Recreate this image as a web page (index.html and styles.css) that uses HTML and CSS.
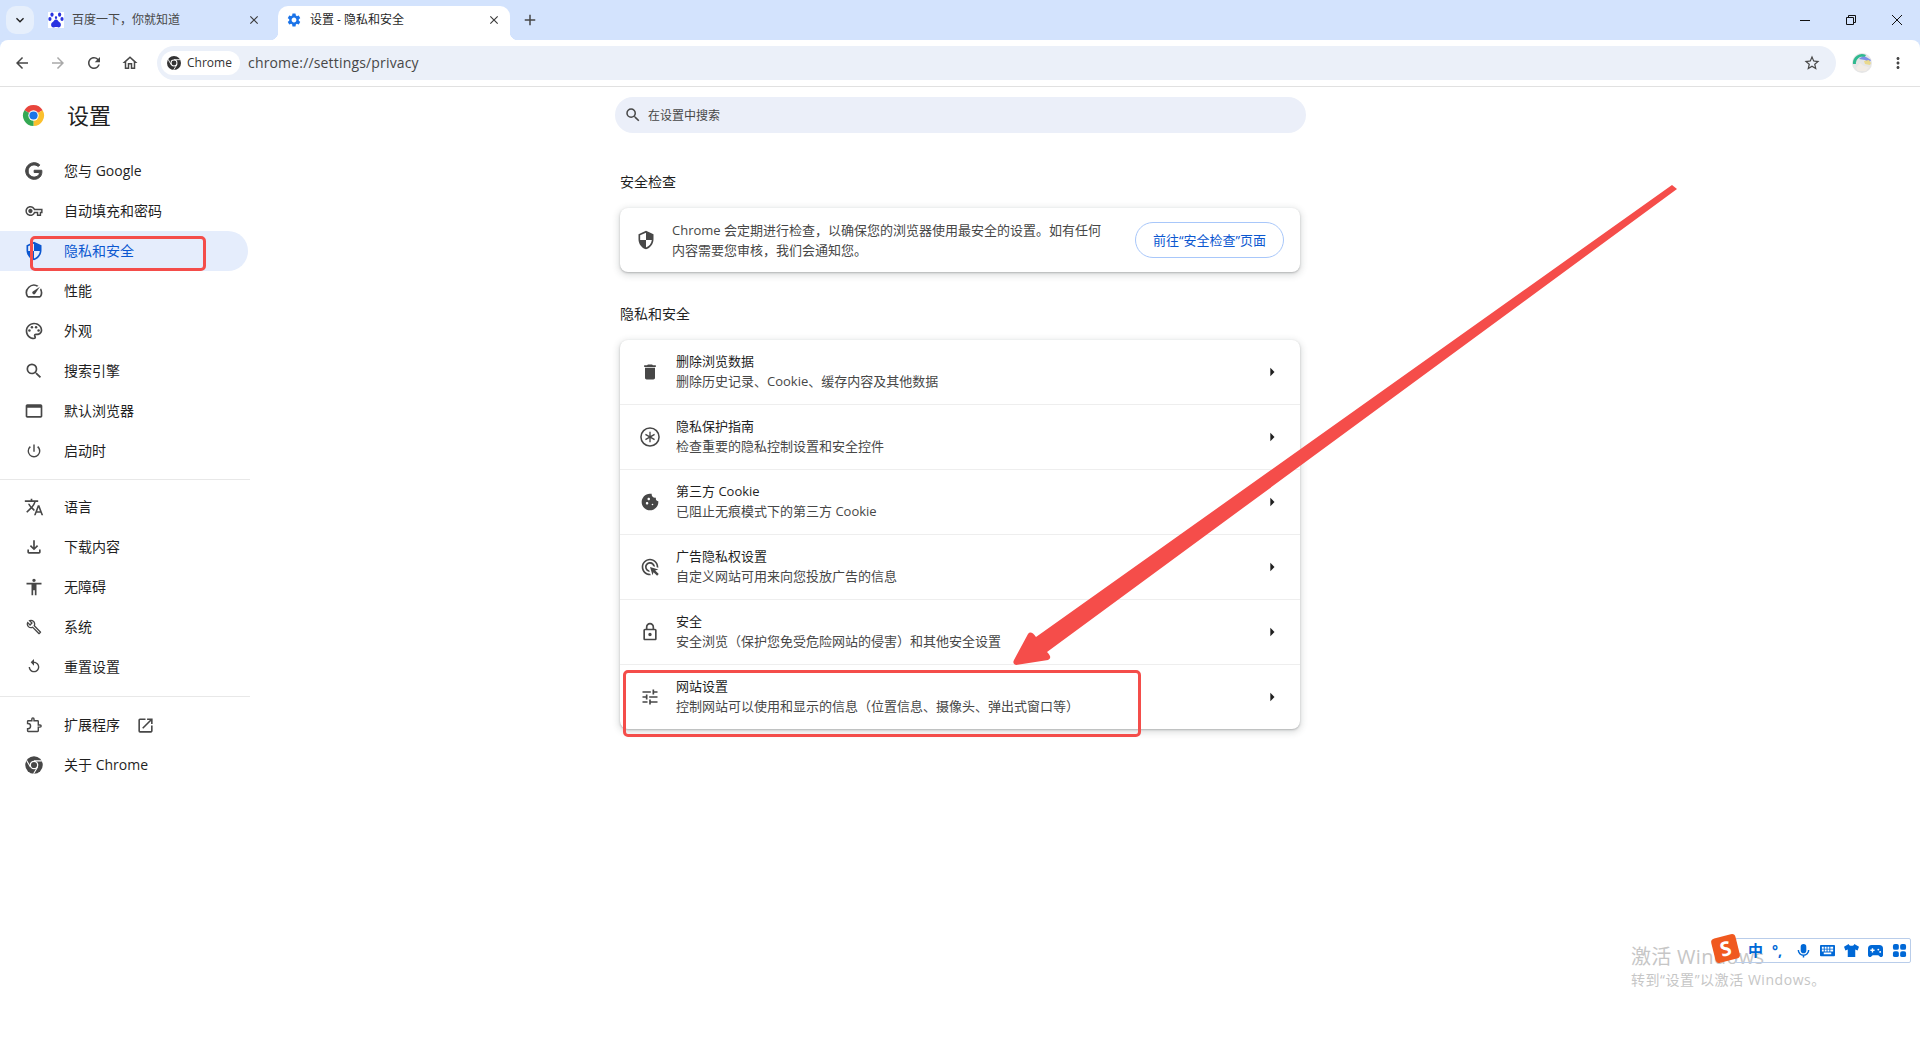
FILE: index.html
```html
<!DOCTYPE html>
<html lang="zh-CN">
<head>
    <meta charset="UTF-8">
    <title>设置 - 隐私和安全</title>
    <link rel="stylesheet" href="styles.css">
</head>
<body>
    <svg class="defs" width="0" height="0">
        <defs>
            <symbol id="chrome-mono" viewBox="0 0 24 24">
                <circle cx="12" cy="12" r="10.5" fill="currentColor"/>
                <path d="M12 7h9.5M7.7 14.5L3 6.3M16.3 14.5L11.5 22.5" stroke="#fff" stroke-width="1.3" fill="none"/>
                <circle cx="12" cy="12" r="5.2" fill="#fff"/>
                <circle cx="12" cy="12" r="3.7" fill="currentColor"/>
            </symbol>
            <symbol id="shield" viewBox="0 0 24 24">
                <path d="M12 1L3 5v6c0 5.55 3.84 10.74 9 12 5.16-1.26 9-6.45 9-12V5l-9-4zm0 10.99h7c-.53 4.12-3.28 7.79-7 8.94V12H5V6.3l7-3.11v8.8z"/>
            </symbol>
            <symbol id="arrow-right" viewBox="0 0 24 24">
                <path d="M10 17l5-5-5-5v10z"/>
            </symbol>
        </defs>
    </svg>

    <header class="tabstrip">
        <button class="tab-search">
            <svg viewBox="0 0 24 24" class="ico-16"><path d="M7.41 8.59L12 13.17l4.59-4.58L18 10l-6 6-6-6z"/></svg>
        </button>
        <div class="tab">
            <svg viewBox="0 0 16 16" class="favicon">
                <rect width="16" height="16" fill="#fff"/>
                <g fill="#2932e1">
                    <ellipse cx="4" cy="2.6" rx="1.6" ry="2.2"/>
                    <ellipse cx="11.6" cy="2.6" rx="1.6" ry="2.2"/>
                    <ellipse cx="1.9" cy="7" rx="1.6" ry="2.1"/>
                    <ellipse cx="14" cy="7" rx="1.6" ry="2.1"/>
                    <ellipse cx="8" cy="5.4" rx="1.1" ry="1.5"/>
                    <path d="M8 7.4c-1.9 0-2.3 2-3.9 3.2C2.5 11.800 2.800 15.500 5.400 15.500c1.200 0 1.700-.4 2.600-.4s1.500.4 2.700.4c2.500 0 2.800-3.700 1.200-4.900C10.300 9.400 9.900 7.400 8 7.400z"/>
                </g>
            </svg>
            <span class="tab-title">百度一下，你就知道</span>
            <svg viewBox="0 0 24 24" class="tab-close"><path d="M19 6.41L17.59 5 12 10.59 6.41 5 5 6.41 10.59 12 5 17.59 6.41 19 12 13.41 17.59 19 19 17.59 13.41 12z"/></svg>
        </div>
        <div class="tab tab-active">
            <svg viewBox="0 0 24 24" class="favicon gear"><path d="M19.14 12.94c.04-.3.06-.61.06-.94 0-.32-.02-.64-.07-.94l2.03-1.58a.49.49 0 0 0 .12-.61l-1.92-3.32a.488.488 0 0 0-.59-.22l-2.39.96c-.5-.38-1.03-.7-1.62-.94l-.36-2.54a.484.484 0 0 0-.48-.41h-3.84c-.24 0-.43.17-.47.41l-.36 2.54c-.59.24-1.13.57-1.62.94l-2.39-.96c-.22-.08-.47 0-.59.22L2.74 8.87c-.12.21-.08.47.12.61l2.03 1.58c-.05.3-.09.63-.09.94s.02.64.07.94l-2.03 1.58a.49.49 0 0 0-.12.61l1.92 3.32c.12.22.37.29.59.22l2.39-.96c.5.38 1.03.7 1.62.94l.36 2.54c.05.24.24.41.48.41h3.84c.24 0 .44-.17.47-.41l.36-2.54c.59-.24 1.13-.56 1.62-.94l2.39.96c.22.08.47 0 .59-.22l1.92-3.32c.12-.22.07-.47-.12-.61l-2.01-1.58zM12 15.600c-1.98 0-3.600-1.620-3.600-3.600s1.620-3.600 3.600-3.600 3.600 1.620 3.600 3.600-1.620 3.600-3.600 3.600z"/></svg>
            <span class="tab-title">设置 - 隐私和安全</span>
            <svg viewBox="0 0 24 24" class="tab-close"><path d="M19 6.41L17.59 5 12 10.59 6.41 5 5 6.41 10.59 12 5 17.59 6.41 19 12 13.41 17.59 19 19 17.59 13.41 12z"/></svg>
        </div>
        <button class="new-tab">
            <svg viewBox="0 0 24 24" class="ico-18"><path d="M19 13h-6v6h-2v-6H5v-2h6V5h2v6h6v2z"/></svg>
        </button>
        <div class="window-controls">
            <span class="win-btn"><svg width="12" height="12" viewBox="0 0 12 12"><path d="M1 6.500h10" stroke="#111" fill="none"/></svg></span>
            <span class="win-btn"><svg width="12" height="12" viewBox="0 0 12 12"><path d="M1.500 3.500h7v7h-7zM3.500 3.500v-2h7v7h-2" stroke="#111" fill="none"/></svg></span>
            <span class="win-btn"><svg width="12" height="12" viewBox="0 0 12 12"><path d="M1 1l10 10M11 1L1 11" stroke="#111" fill="none"/></svg></span>
        </div>
    </header>

    <div class="toolbar">
        <span class="tool-btn"><svg viewBox="0 0 24 24" class="ico-18"><path d="M20 11H7.830l5.590-5.590L12 4l-8 8 8 8 1.410-1.410L7.830 13H20v-2z"/></svg></span>
        <span class="tool-btn disabled"><svg viewBox="0 0 24 24" class="ico-18"><path d="M4 11h12.170l-5.590-5.590L12 4l8 8-8 8-1.410-1.410L16.170 13H4v-2z"/></svg></span>
        <span class="tool-btn"><svg viewBox="0 0 24 24" class="ico-18"><path d="M17.650 6.350A7.958 7.958 0 0 0 12 4c-4.420 0-7.990 3.580-7.990 8s3.570 8 7.990 8c3.730 0 6.840-2.550 7.730-6h-2.080A5.990 5.990 0 0 1 12 18c-3.310 0-6-2.690-6-6s2.690-6 6-6c1.660 0 3.140.69 4.220 1.780L13 11h7V4l-2.350 2.350z"/></svg></span>
        <span class="tool-btn"><svg viewBox="0 0 24 24" class="ico-18"><path d="M12 5.690l5 4.500V18h-2v-6H9v6H7v-7.810l5-4.500M12 3L2 12h3v8h6v-6h2v6h6v-8h3L12 3z"/></svg></span>
        <div class="omnibox">
            <span class="chip">
                <svg class="chip-icon"><use href="#chrome-mono"/></svg>
                Chrome
            </span>
            <span class="url">chrome://settings/privacy</span>
            <svg viewBox="0 0 24 24" class="ico-18 star"><path d="M22 9.240l-7.190-.62L12 2 9.190 8.630 2 9.240l5.460 4.730L5.820 21 12 17.270 18.180 21l-1.630-7.030L22 9.240zM12 15.400l-3.760 2.270 1-4.280-3.320-2.880 4.380-.38L12 6.100l1.710 4.040 4.380.38-3.320 2.880 1 4.280L12 15.400z"/></svg>
        </div>
        <svg class="avatar" viewBox="0 0 20 20">
            <circle cx="10" cy="10" r="10" fill="#e6e6e6"/>
            <path d="M1 11A9 9 0 0 1 14 2l-1.500 2.500A6 6 0 0 0 4 11z" fill="#2fb98f"/>
            <path d="M7 6a6 6 0 0 1 8-1.500L19 7l-2 3-4-3z" fill="#7f8fe8"/>
            <path d="M12 8l5-1 2 3-1 2-5-1z" fill="#e9d98e"/>
            <path d="M4 15l4-5 4 3 5 1-3 4H6z" fill="#f1ece6"/>
        </svg>
        <svg viewBox="0 0 24 24" class="ico-18 menu-dots"><path d="M12 8c1.100 0 2-.9 2-2s-.9-2-2-2-2 .9-2 2 .9 2 2 2zm0 2c-1.100 0-2 .9-2 2s.9 2 2 2 2-.9 2-2-.9-2-2-2zm0 6c-1.100 0-2 .9-2 2s.9 2 2 2 2-.9 2-2-.9-2-2-2z"/></svg>
    </div>

    <div class="page">
        <aside class="sidebar">
            <div class="brand">
                <svg viewBox="0 0 24 24" class="logo">
                    <path d="M12 12L2.470 6.500A11 11 0 0 1 21.530 6.500z" fill="#e8453c"/>
                    <path d="M12 12L21.530 6.500A11 11 0 0 1 12 23z" fill="#fbc02d"/>
                    <path d="M12 12L12 23A11 11 0 0 1 2.470 6.500z" fill="#34a853"/>
                    <circle cx="12" cy="12" r="5.400" fill="#fff"/>
                    <circle cx="12" cy="12" r="4.300" fill="#1a73e8"/>
                </svg>
                <span class="brand-name">设置</span>
            </div>
            <nav class="nav">
                <a class="nav-item"><svg viewBox="0 0 24 24" class="heavy"><path d="M21.350 11.100h-9.170v2.730h6.510c-.33 3.810-3.500 5.440-6.500 5.440C8.360 19.270 5 16.250 5 12c0-4.100 3.200-7.270 7.200-7.270 3.090 0 4.900 1.970 4.900 1.970L19 4.720S16.560 2 12.100 2C6.420 2 2 6.800 2 12c0 5.050 4.130 10 10.220 10 5.350 0 9.250-3.670 9.250-9.090 0-1.150-.15-1.810-.15-1.810z"/></svg>您与 Google</a>
                <a class="nav-item"><svg viewBox="-2 -2 28 28"><path d="M22 19h-6v-4h-2.680c-1.140 2.420-3.600 4-6.320 4-3.860 0-7-3.140-7-7s3.140-7 7-7c2.720 0 5.170 1.580 6.320 4H24v6h-2v4zm-4-2h2v-4h2v-2H11.940l-.23-.67C11.010 8.340 9.110 7 7 7c-2.760 0-5 2.240-5 5s2.240 5 5 5c2.110 0 4.010-1.340 4.710-3.330l.23-.67H18v4zM7 15c-1.650 0-3-1.350-3-3s1.350-3 3-3 3 1.350 3 3-1.350 3-3 3z"/></svg>自动填充和密码</a>
                <a class="nav-item active"><svg><use href="#shield"/></svg>隐私和安全</a>
                <a class="nav-item"><svg viewBox="0 0 24 24"><path d="M20.380 8.570l-1.230 1.850a8 8 0 0 1-.22 7.580H5.070A8 8 0 0 1 15.580 6.850l1.850-1.230A10 10 0 0 0 3.350 19a2 2 0 0 0 1.720 1h13.850a2 2 0 0 0 1.740-1 10 10 0 0 0-.27-10.440zm-9.790 6.840a2 2 0 0 0 2.830 0l5.660-8.490-8.490 5.660a2 2 0 0 0 0 2.830z"/></svg>性能</a>
                <a class="nav-item"><svg viewBox="0 0 24 24"><path d="M12 22C6.490 22 2 17.510 2 12S6.490 2 12 2s10 4.040 10 9c0 3.310-2.690 6-6 6h-1.770c-.28 0-.5.22-.5.5 0 .12.05.23.13.33.41.47.64 1.060.64 1.670A2.500 2.500 0 0 1 12 22zm0-18c-4.410 0-8 3.590-8 8s3.590 8 8 8c.28 0 .5-.22.5-.5a.54.54 0 0 0-.14-.35c-.41-.46-.63-1.050-.63-1.650a2.500 2.500 0 0 1 2.500-2.500H16c2.210 0 4-1.790 4-4 0-3.860-3.590-7-8-7z"/><circle cx="6.500" cy="11.500" r="1.500"/><circle cx="9.500" cy="7.500" r="1.500"/><circle cx="14.500" cy="7.500" r="1.500"/><circle cx="17.500" cy="11.500" r="1.500"/></svg>外观</a>
                <a class="nav-item"><svg viewBox="0 0 24 24"><path d="M15.500 14h-.79l-.28-.27A6.471 6.471 0 0 0 16 9.500 6.500 6.500 0 1 0 9.500 16c1.610 0 3.090-.59 4.230-1.570l.27.28v.79l5 4.990L20.490 19l-4.990-5zm-6 0C7.010 14 5 11.990 5 9.500S7.010 5 9.500 5 14 7.010 14 9.500 11.990 14 9.500 14z"/></svg>搜索引擎</a>
                <a class="nav-item"><svg viewBox="0 0 24 24"><path d="M20 4H4c-1.100 0-2 .9-2 2v12c0 1.100.9 2 2 2h16c1.100 0 2-.9 2-2V6c0-1.100-.9-2-2-2zm0 14H4V8h16v10z"/></svg>默认浏览器</a>
                <a class="nav-item"><svg viewBox="-2 -2 28 28"><path d="M13 3h-2v10h2V3zm4.830 2.170l-1.420 1.420A6.920 6.920 0 0 1 19 12c0 3.870-3.130 7-7 7A6.995 6.995 0 0 1 7.580 6.580L6.170 5.170A8.932 8.932 0 0 0 3 12a9 9 0 0 0 18 0c0-2.740-1.230-5.180-3.170-6.830z"/></svg>启动时</a>
            </nav>
            <div class="nav-sep sep-first"></div>
            <nav class="nav">
                <a class="nav-item"><svg viewBox="0 0 24 24"><path d="M12.870 15.070l-2.540-2.510.03-.03A17.520 17.520 0 0 0 14.070 6H17V4h-7V2H8v2H1v1.990h11.170C11.500 7.920 10.440 9.750 9 11.350 8.070 10.320 7.300 9.190 6.690 8h-2c.73 1.630 1.730 3.170 2.980 4.560l-5.090 5.020L4 19l5-5 3.110 3.110.76-2.040zM18.500 10h-2L12 22h2l1.120-3h4.750L21 22h2l-4.500-12zm-2.620 7l1.620-4.330L19.120 17h-3.240z"/></svg>语言</a>
                <a class="nav-item"><svg viewBox="0 0 24 24"><path d="M18 15v3H6v-3H4v3c0 1.100.9 2 2 2h12c1.100 0 2-.9 2-2v-3h-2zm-1-4l-1.410-1.410L13 12.170V4h-2v8.170L8.410 9.590 7 11l5 5 5-5z"/></svg>下载内容</a>
                <a class="nav-item"><svg viewBox="0 0 24 24"><path d="M12 2c1.100 0 2 .9 2 2s-.9 2-2 2-2-.9-2-2 .9-2 2-2zm9 7h-6v13h-2v-6h-2v6H9V9H3V7h18v2z"/></svg>无障碍</a>
                <a class="nav-item"><svg viewBox="-3 -3 30 30"><path d="M22.610 18.990l-9.080-9.080c.93-2.340.45-5.100-1.440-7C9.790.61 6.210.4 3.660 2.260L7.500 6.110 6.080 7.520 2.250 3.690C.39 6.230.6 9.820 2.900 12.110c1.860 1.860 4.570 2.350 6.890 1.480l9.110 9.110c.39.39 1.020.39 1.410 0l2.300-2.300c.4-.38.4-1.010 0-1.410zm-3 1.600l-9.460-9.460c-.61.45-1.290.72-2 .82-1.360.2-2.790-.21-3.830-1.250C3.370 9.760 2.930 8.500 3 7.260l3.090 3.090 4.240-4.240-3.090-3.090c1.240-.07 2.490.37 3.440 1.310 1.080 1.080 1.490 2.570 1.240 3.960-.12.71-.42 1.370-.88 1.960l9.450 9.450-.88.89z"/></svg>系统</a>
                <a class="nav-item"><svg viewBox="-3 -2 30 30"><path d="M12 5V1L7 6l5 5V7c3.310 0 6 2.690 6 6s-2.690 6-6 6-6-2.690-6-6H4c0 4.420 3.580 8 8 8s8-3.580 8-8-3.580-8-8-8z"/></svg>重置设置</a>
            </nav>
            <div class="nav-sep sep-second"></div>
            <nav class="nav">
                <a class="nav-item"><svg viewBox="-2 -2 28 28"><path class="outline" d="M20.500 12H18V7c0-.6-.4-1-1-1h-5V3.500a1.500 1.500 0 0 0-3 0V6H4c-.6 0-1 .4-1 1v2.800h.5a3.700 3.700 0 0 1 0 7.400H3V20c0 .6.4 1 1 1h13c.6 0 1-.4 1-1v-5h2.500a1.500 1.500 0 0 0 0-3z"/></svg>扩展程序<svg class="external" viewBox="0 0 24 24"><path d="M19 19H5V5h7V3H5a2 2 0 0 0-2 2v14a2 2 0 0 0 2 2h14c1.100 0 2-.9 2-2v-7h-2v7zM14 3v2h3.590l-9.830 9.830 1.410 1.410L19 6.410V10h2V3h-7z"/></svg></a>
                <a class="nav-item"><svg class="mono"><use href="#chrome-mono"/></svg>关于 Chrome</a>
            </nav>
        </aside>

        <main class="content">
            <div class="search">
                <svg viewBox="0 0 24 24" class="ico-18"><path d="M15.500 14h-.79l-.28-.27A6.471 6.471 0 0 0 16 9.500 6.500 6.500 0 1 0 9.500 16c1.610 0 3.090-.59 4.230-1.570l.27.28v.79l5 4.990L20.490 19l-4.990-5zm-6 0C7.010 14 5 11.990 5 9.500S7.010 5 9.500 5 14 7.010 14 9.500 11.990 14 9.500 14z"/></svg>
                <span class="search-text">在设置中搜索</span>
            </div>

            <section class="section">
                <h2 class="section-title first">安全检查</h2>
                <div class="card check-card">
                    <svg class="row-icon"><use href="#shield"/></svg>
                    <p class="check-text">Chrome 会定期进行检查，以确保您的浏览器使用最安全的设置。如有任何<br>内容需要您审核，我们会通知您。</p>
                    <span class="check-btn">前往“安全检查”页面</span>
                </div>

                <h2 class="section-title">隐私和安全</h2>
                <div class="card">
                    <div class="row">
                        <svg class="row-icon" viewBox="0 0 24 24"><path d="M6 19c0 1.100.9 2 2 2h8c1.100 0 2-.9 2-2V7H6v12zM19 4h-3.500l-1-1h-5l-1 1H5v2h14V4z"/></svg>
                        <div class="row-text"><div class="row-title">删除浏览数据</div><div class="row-sub">删除历史记录、Cookie、缓存内容及其他数据</div></div>
                        <svg class="chevron"><use href="#arrow-right"/></svg>
                    </div>
                    <div class="row">
                        <svg class="row-icon" viewBox="1.500 1.500 21 21"><circle cx="12" cy="12" r="9.500" class="ring"/><path class="rays" d="M12 6.500v11M7.200 9.200l9.600 5.600M16.800 9.200l-9.600 5.600"/></svg>
                        <div class="row-text"><div class="row-title">隐私保护指南</div><div class="row-sub">检查重要的隐私控制设置和安全控件</div></div>
                        <svg class="chevron"><use href="#arrow-right"/></svg>
                    </div>
                    <div class="row">
                        <svg class="row-icon" viewBox="0 0 24 24"><path d="M21.950 10.990c-1.790-.03-3.700-1.950-2.680-4.220-2.970 1-5.780-1.590-5.190-4.560C7.110.74 2 6.410 2 12c0 5.520 4.480 10 10 10 5.890 0 10.540-5.080 9.950-11.010zM8.500 15c-.83 0-1.500-.67-1.500-1.500S7.670 12 8.500 12s1.500.67 1.500 1.500S9.330 15 8.500 15zm2-5C9.670 10 9 9.330 9 8.500S9.670 7 10.500 7s1.500.67 1.500 1.500-.67 1.500-1.500 1.500zm4.500 6c-.55 0-1-.45-1-1s.45-1 1-1 1 .45 1 1-.45 1-1 1z"/></svg>
                        <div class="row-text"><div class="row-title">第三方 Cookie</div><div class="row-sub">已阻止无痕模式下的第三方 Cookie</div></div>
                        <svg class="chevron"><use href="#arrow-right"/></svg>
                    </div>
                    <div class="row">
                        <svg class="row-icon" viewBox="0 0 24 24"><path d="M11.710 17.990A5.993 5.993 0 0 1 6 12c0-3.310 2.690-6 6-6 3.220 0 5.840 2.530 5.990 5.710l-2.100-.63A3.999 3.999 0 0 0 12 8c-2.210 0-4 1.790-4 4 0 1.870 1.280 3.440 3.010 3.880l.7 2.110zM22 12c0 .3-.01.6-.04.9l-1.970-.59c.01-.1.01-.21.01-.31 0-4.420-3.580-8-8-8s-8 3.580-8 8 3.580 8 8 8c.1 0 .21 0 .31-.01l.59 1.970c-.3.03-.6.04-.9.04-5.520 0-10-4.480-10-10S6.480 2 12 2s10 4.480 10 10zm-3.770 4.260L22 15l-10-3 3 10 1.260-3.770 4.270 4.270 1.980-1.980-4.280-4.260z"/></svg>
                        <div class="row-text"><div class="row-title">广告隐私权设置</div><div class="row-sub">自定义网站可用来向您投放广告的信息</div></div>
                        <svg class="chevron"><use href="#arrow-right"/></svg>
                    </div>
                    <div class="row">
                        <svg class="row-icon" viewBox="0 0 24 24"><path d="M18 8h-1V6c0-2.760-2.240-5-5-5S7 3.240 7 6v2H6c-1.100 0-2 .9-2 2v10c0 1.100.9 2 2 2h12c1.100 0 2-.9 2-2V10c0-1.100-.9-2-2-2zM9 6c0-1.660 1.340-3 3-3s3 1.340 3 3v2H9V6zm9 14H6V10h12v10zm-6-3c1.100 0 2-.9 2-2s-.9-2-2-2-2 .9-2 2 .9 2 2 2z"/></svg>
                        <div class="row-text"><div class="row-title">安全</div><div class="row-sub">安全浏览（保护您免受危险网站的侵害）和其他安全设置</div></div>
                        <svg class="chevron"><use href="#arrow-right"/></svg>
                    </div>
                    <div class="row">
                        <svg class="row-icon" viewBox="0 0 24 24"><path d="M3 17v2h6v-2H3zM3 5v2h10V5H3zm10 16v-2h8v-2h-8v-2h-2v6h2zM7 9v2H3v2h4v2h2V9H7zm14 4v-2H11v2h10zm-6-4h2V7h4V5h-4V3h-2v6z"/></svg>
                        <div class="row-text"><div class="row-title">网站设置</div><div class="row-sub">控制网站可以使用和显示的信息（位置信息、摄像头、弹出式窗口等）</div></div>
                        <svg class="chevron"><use href="#arrow-right"/></svg>
                    </div>
                </div>
            </section>
        </main>
    </div>

    <!-- annotations drawn on top of the screenshot -->
    <div class="mark mark-nav"></div>
    <div class="mark mark-row"></div>
    <svg class="arrow" width="1920" height="1040" viewBox="0 0 1920 1040">
        <path d="M1672 185L1677 189L1047 652Q1053 658 1048 660L1016 665Q1012 664 1014 660L1028 634Q1031 630 1036 637Z" fill="#f54d4a"/>
    </svg>

    <div class="watermark">
        <div class="wm-title">激活 Windows</div>
        <div class="wm-sub">转到“设置”以激活 Windows。</div>
    </div>

    <div class="ime">
        <span class="ime-logo"><span>S</span></span>
        <span class="ime-cn">中</span>
        <span class="ime-dot">°,</span>
        <svg viewBox="0 0 16 16"><rect x="5" y="1" width="6" height="10" rx="3"/><path d="M2.500 7.500a5.500 5.500 0 0 0 11 0M8 13v2.500" fill="none" stroke="#0068d6" stroke-width="1.600"/></svg>
        <svg viewBox="0 0 16 16"><path fill-rule="evenodd" d="M1 2h14a1 1 0 0 1 1 1v10a1 1 0 0 1-1 1H1a1 1 0 0 1-1-1V3a1 1 0 0 1 1-1zm1 2v2h2V4zm3 0v2h2V4zm3 0v2h2V4zm3 0v2h3V4zM2 7v2h2V7zm3 0v2h2V7zm3 0v2h2V7zm3 0v2h3V7zM4 10v2h8v-2z"/></svg>
        <svg viewBox="0 0 16 16"><path d="M5 1L0 4l1.500 4L4 7v8h8V7l2.500 1L16 4l-5-3c-.5 1.500-1.500 2-3 2s-2.500-.5-3-2z"/></svg>
        <svg viewBox="0 0 16 16"><path fill-rule="evenodd" d="M4 2h8a4 4 0 0 1 4 4v7a2 2 0 0 1-3.500 1.300L11 13H5l-1.500 1.300A2 2 0 0 1 0 13V6a4 4 0 0 1 4-4zm0 3.500V7H2.500v1.500H4V10h1.500V8.500H7V7H5.500V5.500zM11 6a1 1 0 1 0 0 2 1 1 0 0 0 0-2zm2 2.500a1 1 0 1 0 0 2 1 1 0 0 0 0-2z"/></svg>
        <svg viewBox="0 0 16 16"><rect x="1" y="1" width="6.300" height="6.300" rx="2"/><rect x="8.700" y="1" width="6.300" height="6.300" rx="2"/><rect x="1" y="8.700" width="6.300" height="6.300" rx="2"/><rect x="8.700" y="8.700" width="6.300" height="6.300" rx="2"/></svg>
    </div>
</body>
</html>
```

FILE: styles.css
```css
* {
    box-sizing: border-box;
}
html, body {
    margin: 0;
    padding: 0;
}
body {
    position: relative;
    width: 1920px;
    height: 1040px;
    overflow: hidden;
    background-color: #fff;
    color: #1f1f1f;
    font-family: "Open Sans", "Noto Sans CJK SC", sans-serif;
    font-size: 13px;
    line-height: 20px;
}
svg {
    fill: currentColor;
    flex: none;
}
.defs {
    position: absolute;
}
.ico-16 {
    width: 16px;
    height: 16px;
}
.ico-18 {
    width: 18px;
    height: 18px;
}

/* tab strip */
.tabstrip {
    display: flex;
    height: 40px;
    background-color: #d3e3fd;
}
.tab-search {
    display: flex;
    align-items: center;
    justify-content: center;
    width: 28px;
    height: 28px;
    margin: 6px 4px 0 6px;
    padding: 0;
    border: none;
    border-radius: 10px;
    background-color: #e6effc;
    color: #1f1f1f;
}
.tab {
    display: flex;
    align-items: center;
    width: 232px;
    height: 34px;
    margin-top: 6px;
    padding: 0 9px 6px 10px;
    color: #474747;
    font-size: 12px;
}
.tab-active {
    position: relative;
    margin-left: 8px;
    padding-left: 8px;
    border-radius: 10px 10px 0 0;
    background-color: #fff;
    color: #1f1f1f;
}
.tab-active::before,
.tab-active::after {
    content: "";
    position: absolute;
    bottom: 0;
    width: 8px;
    height: 8px;
}
.tab-active::before {
    left: -8px;
    background: radial-gradient(circle at 0 0, transparent 8px, #fff 8.5px);
}
.tab-active::after {
    right: -8px;
    background: radial-gradient(circle at 100% 0, transparent 8px, #fff 8.5px);
}
.favicon {
    width: 16px;
    height: 16px;
}
.gear {
    color: #1a73e8;
}
.tab-title {
    flex: 1;
    margin-left: 8px;
    white-space: nowrap;
}
.tab-close {
    width: 14px;
    height: 14px;
    color: #3c3c3c;
}
.new-tab {
    display: flex;
    align-items: center;
    justify-content: center;
    width: 28px;
    height: 28px;
    margin: 6px 0 0 6px;
    padding: 0;
    border: none;
    background: none;
    color: #474747;
}
.window-controls {
    display: flex;
    margin-left: auto;
}
.win-btn {
    display: flex;
    align-items: center;
    justify-content: center;
    width: 46px;
    height: 40px;
}

/* toolbar */
.toolbar {
    display: flex;
    align-items: center;
    height: 47px;
    padding-left: 8px;
    border-bottom: 1px solid #e1e1e1;
    border-radius: 8px 8px 0 0;
    background-color: #fff;
    box-shadow: 0 -8px 0 #d3e3fd;
    color: #474747;
}
.tool-btn {
    display: flex;
    align-items: center;
    justify-content: center;
    width: 28px;
    height: 28px;
    margin-right: 8px;
}
.tool-btn.disabled {
    color: #a9a9a9;
}
.omnibox {
    display: flex;
    align-items: center;
    width: 1679px;
    height: 34px;
    margin-left: 5px;
    padding: 0 15px 0 4px;
    border-radius: 17px;
    background-color: #ebf0f9;
}
.chip {
    display: flex;
    align-items: center;
    width: 79px;
    height: 24px;
    padding-left: 5px;
    border-radius: 12px;
    background-color: #fff;
    color: #333;
    font-size: 12px;
}
.chip-icon {
    width: 16px;
    height: 16px;
    margin-right: 5px;
    color: #333;
}
.url {
    flex: 1;
    margin-left: 8px;
    color: #474747;
    font-size: 14px;
    letter-spacing: 0.17px;
}
.avatar {
    width: 20px;
    height: 20px;
    margin-left: 16px;
}
.menu-dots {
    margin-left: 17px;
}

/* settings page */
.page {
    display: flex;
    height: 953px;
}
.sidebar {
    width: 250px;
    flex: none;
}
.brand {
    display: flex;
    align-items: center;
    height: 64px;
    padding: 0 0 8px 22px;
}
.logo {
    width: 23px;
    height: 23px;
}
.brand-name {
    margin-left: 22px;
    font-size: 22px;
    line-height: 30px;
}
.nav-item {
    display: flex;
    align-items: center;
    width: 248px;
    height: 40px;
    margin-left: 0;
    padding-left: 24px;
    border-radius: 0 20px 20px 0;
    color: #1f1f1f;
    font-size: 14px;
}
.nav-item > svg:first-child {
    width: 20px;
    height: 20px;
    margin-right: 20px;
    color: #474747;
}
.nav-item.active {
    background-color: #e5edfc;
    color: #0b57d0;
}
.nav-item.active > svg:first-child {
    color: #0b57d0;
}
.nav-item .outline {
    fill: none;
    stroke: currentColor;
    stroke-width: 2;
}
.nav-item .heavy {
    stroke: currentColor;
    stroke-width: 1.2;
}
.external {
    width: 19px;
    height: 19px;
    margin-left: 16px;
    color: #474747;
}
.nav-sep {
    height: 1px;
    background-color: #e8e8e8;
}
.sep-first {
    margin: 8px 0 7px;
}
.sep-second {
    margin: 9px 0 8px;
}

.content {
    width: 691px;
    margin-left: 365px;
    padding-top: 10px;
}
.search {
    display: flex;
    align-items: center;
    gap: 6px;
    height: 36px;
    padding-left: 9px;
    border-radius: 18px;
    background-color: #ebeff9;
    color: #474747;
    font-size: 12px;
}
.search-text {
    padding-top: 2px;
}
.section {
    padding: 0 6px 0 5px;
}
.section-title {
    margin: 32px 0 16px;
    color: #1f1f1f;
    font-size: 14px;
    font-weight: 400;
    line-height: 20px;
}
.section-title.first {
    margin-top: 39px;
}
.card {
    border-radius: 8px;
    background-color: #fff;
    box-shadow: 0 1px 2px rgba(60, 64, 67, 0.3), 0 2px 6px 2px rgba(60, 64, 67, 0.15);
}
.check-card {
    display: flex;
    align-items: center;
    height: 64px;
    padding: 0 16px;
}
.row-icon {
    width: 20px;
    height: 20px;
    color: #474747;
}
.check-text {
    flex: 1;
    margin: 0 0 0 16px;
    color: #474747;
    font-size: 13px;
    line-height: 20px;
}
.check-btn {
    display: flex;
    align-items: center;
    justify-content: center;
    width: 149px;
    height: 36px;
    border: 1px solid #a8c7fa;
    border-radius: 18px;
    color: #0b57d0;
    font-size: 13px;
    white-space: nowrap;
}
.row {
    display: flex;
    align-items: center;
    height: 65px;
    padding: 0 18px 0 20px;
    border-top: 1px solid #eeeeee;
}
.row:first-child {
    height: 64px;
    border-top: none;
}
.row-text {
    flex: 1;
    margin-left: 16px;
    padding-bottom: 2px;
}
.row-title {
    color: #1f1f1f;
}
.row-sub {
    color: #474747;
}
.ring {
    fill: none;
    stroke: currentColor;
    stroke-width: 1.6;
}
.rays {
    fill: none;
    stroke: currentColor;
    stroke-width: 1.4;
}
.chevron {
    width: 20px;
    height: 20px;
    color: #1f1f1f;
}

/* red annotations */
.mark {
    position: absolute;
    border: 3.5px solid #f44d4a;
    border-radius: 5px;
}
.mark-nav {
    left: 30px;
    top: 236px;
    width: 176px;
    height: 35px;
}
.mark-row {
    left: 623px;
    top: 670px;
    width: 518px;
    height: 67px;
}
.arrow {
    position: absolute;
    left: 0;
    top: 0;
    pointer-events: none;
}

/* activation watermark + IME bar */
.watermark {
    position: absolute;
    left: 1631px;
    top: 943px;
    color: #c6c6c6;
    white-space: nowrap;
}
.wm-title {
    font-size: 20px;
    line-height: 28px;
    letter-spacing: 0.3px;
}
.wm-sub {
    margin-top: -1px;
    font-size: 14px;
    line-height: 20px;
    letter-spacing: 0.55px;
}
.ime {
    position: absolute;
    left: 1735px;
    top: 938px;
    display: flex;
    align-items: center;
    gap: 9px;
    width: 176px;
    height: 25px;
    padding-left: 12px;
    border: 1px solid #b9cdea;
    border-radius: 2px;
    color: #0068d6;
}
.ime svg {
    width: 15px;
    height: 15px;
}
.ime-logo {
    position: absolute;
    left: -23px;
    top: -3px;
    display: flex;
    align-items: center;
    justify-content: center;
    width: 25px;
    height: 25px;
    border-radius: 4px;
    background-color: #f0591f;
    color: #fff;
    font-size: 20px;
    font-weight: 700;
    transform: rotate(-14deg);
}
.ime-cn {
    width: 15px;
    font-size: 15px;
    font-weight: 700;
    line-height: 15px;
}
.ime-dot {
    width: 15px;
    font-size: 14px;
    font-weight: 700;
    line-height: 12px;
}
```
